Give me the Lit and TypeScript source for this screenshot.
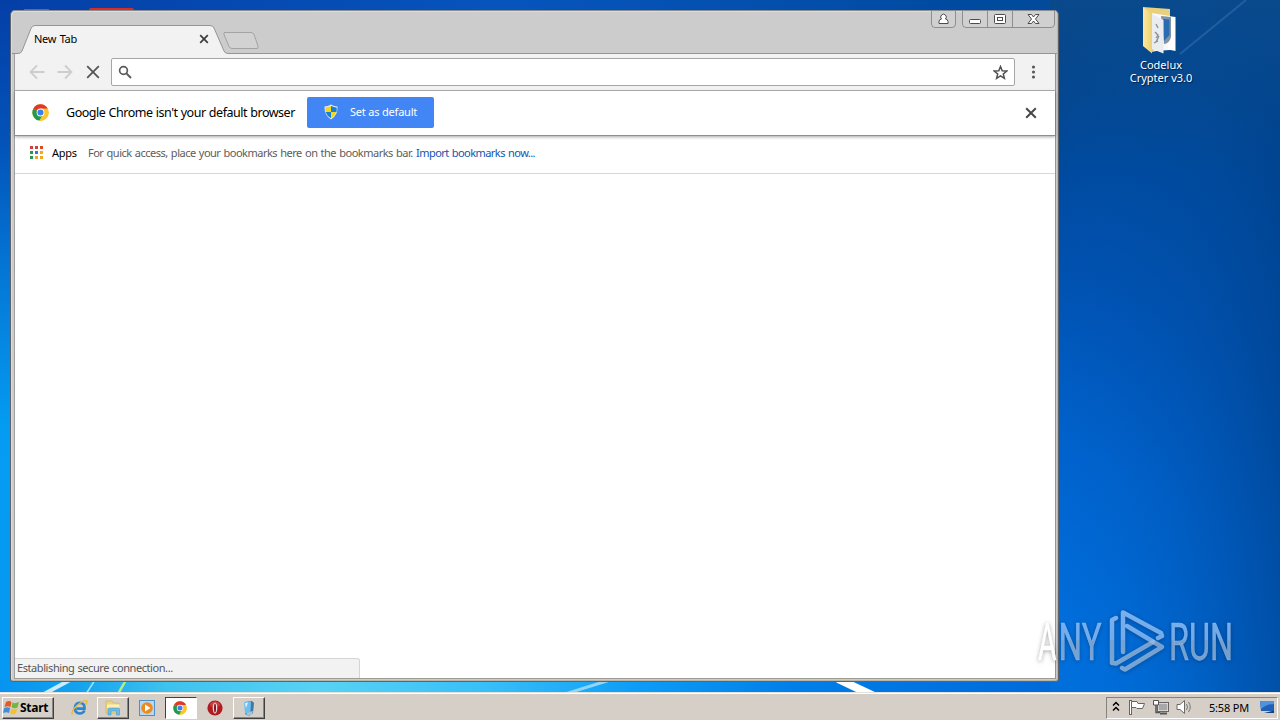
import { LitElement, html, svg, css } from "lit";
import { customElement } from "lit/decorators.js";

const chromeLogo = (size: number) => html`<svg class="ico" width=${size} height=${size} viewBox="0 0 48 48">
  <circle cx="24" cy="24" r="23" fill="#fbc116" />
  <path d="M24 24 L4 12.5 A23 23 0 0 0 21 46.8 L32 29z" fill="#229a52" />
  <path d="M24 24 L4 12.5 A23 23 0 0 1 44.4 13.5 H24z" fill="#dc3a2c" />
  <path d="M24 13.5 H44.4 A23 23 0 0 1 21 46.8 L33.4 29z" fill="#fdc52c" />
  <circle cx="24" cy="24" r="11" fill="#fff" />
  <circle cx="24" cy="24" r="8.6" fill="#3f7fe8" />
</svg>`;

const APP_DOTS = ["#c8443c", "#c8443c", "#dc4c1c", "#2a9450", "#2f78e0", "#f0a81c", "#2a9450", "#f0a81c", "#f0a81c"];

@customElement("desk-wallpaper")
class DeskWallpaper extends LitElement {
  static styles = css`
    :host { display: block; width: 1280px; height: 692px; overflow: hidden; }
    svg { display: block; }
  `;
  render() {
    return html`<svg width="1280" height="692">
      <defs>
        <linearGradient id="l" x1="0" y1="0" x2="0" y2="1">
          <stop offset="0" stop-color="#043fa6" /><stop offset=".2" stop-color="#0352b8" />
          <stop offset=".4" stop-color="#0478d6" /><stop offset=".62" stop-color="#049cf2" />
          <stop offset="1" stop-color="#0698f2" />
        </linearGradient>
        <linearGradient id="t" x1="0" x2="1">
          <stop offset="0" stop-color="#043fa6" /><stop offset=".4" stop-color="#0655bd" />
          <stop offset=".75" stop-color="#004ba0" /><stop offset="1" stop-color="#0a4a8c" />
        </linearGradient>
        <linearGradient id="r" gradientUnits="userSpaceOnUse" x1="1040" y1="620" x2="1300" y2="130">
          <stop offset="0" stop-color="#006fdc" /><stop offset=".3" stop-color="#0062cc" />
          <stop offset=".6" stop-color="#004fac" /><stop offset="1" stop-color="#003f84" />
        </linearGradient>
        <linearGradient id="rd" x1="0" x2="1">
          <stop offset="0" stop-color="#0068d8" stop-opacity="0" /><stop offset=".4" stop-color="#0058b8" stop-opacity=".25" />
          <stop offset="1" stop-color="#004594" stop-opacity=".7" />
        </linearGradient>
        <linearGradient id="rt" x1="0" y1="0" x2="0" y2="1">
          <stop offset="0" stop-color="#0a4a8c" stop-opacity=".9" /><stop offset="1" stop-color="#0a4a8c" stop-opacity="0" />
        </linearGradient>
        <linearGradient id="b" x1="0" x2="1">
          <stop offset="0" stop-color="#0694f0" /><stop offset=".06" stop-color="#14a2ee" />
          <stop offset=".13" stop-color="#3ec2ee" /><stop offset=".25" stop-color="#58d2f4" />
          <stop offset=".38" stop-color="#38bff8" /><stop offset=".5" stop-color="#0c9cf6" />
          <stop offset=".62" stop-color="#007fe8" /><stop offset=".8" stop-color="#006cdc" />
          <stop offset="1" stop-color="#004fa8" />
        </linearGradient>
      </defs>
      <rect width="1280" height="20" fill="url(#t)" />
      <rect y="0" width="20" height="692" fill="url(#l)" />
      <rect y="680" width="1280" height="14" fill="url(#b)" />
      <rect x="1050" width="230" height="692" fill="url(#r)" />
      <rect x="1050" width="230" height="692" fill="url(#rd)" />
      <rect x="1050" width="230" height="170" fill="url(#rt)" />
      <path d="M1180 54 L1246 0" stroke="#6f9fd0" stroke-opacity=".25" stroke-width="2" />
      <g fill="none">
        <path d="M44 694 L70 680" stroke="#c9edff" stroke-width="4" />
        <path d="M86 694 L95 680" stroke="#a6e3fb" stroke-width="1.5" />
        <path d="M118 694 L126 680" stroke="#b6ec86" stroke-width="2.5" />
        <path d="M565 694 L610 680" stroke="#8fd6fa" stroke-width="3" />
        <path d="M838 679 L874 696" stroke="#fff" stroke-width="8" />
      </g>
      <rect x="24" y="9" width="25" height="3" fill="#3f70b8" />
      <rect x="89" y="8" width="45" height="5" rx="2" fill="#d82c24" />
    </svg>`;
  }
}

@customElement("browser-window")
class BrowserWindow extends LitElement {
  static styles = css`
    * { box-sizing: border-box; }
    :host {
      display: flex; flex-direction: column; position: relative;
      width: 1049px; height: 672px; background: #ccc;
      border: 1px solid #606468; border-top-color: #8a8e94; border-radius: 5px 5px 3px 3px;
      padding: 1px 2px 2px 3px; box-sizing: border-box;
      box-shadow: inset 1px 1px 0 #dcdcdc, inset -1px -1px 0 #b9b4aa;
      font: 11px "Noto Sans", sans-serif; color: #000; white-space: nowrap;
    }
    svg { display: block; flex: none; }
    .strip { height: 41px; flex: none; position: relative; z-index: 1; display: flex; margin: 0 -1px; }
    .tabshape { position: absolute; left: -1px; top: 0; }
    .tab { position: relative; display: flex; align-items: center; justify-content: space-between;
      width: 175px; height: 27px; margin: 13px 0 0 21px; }
    .tabname { letter-spacing: -.3px; word-spacing: 1px; }
    .controls { position: absolute; right: 1px; top: -1px; }
    .client { flex: 1; display: flex; flex-direction: column; background: #fff; min-height: 0;
      border-left: 1px solid #a0a0a0; border-right: 1px solid #98948c; border-bottom: 1px solid #a09c94; }
    .toolbar { height: 38px; flex: none; background: #f2f2f2; border-bottom: 1px solid #b4b4b4;
      display: flex; align-items: center; padding: 1px 14px 0 14px; gap: 12px; position: relative; }
    .omni { flex: 1; height: 28px; border: 1px solid #a6a6a6; border-radius: 2px; background: #fff;
      display: flex; align-items: center; justify-content: space-between; padding: 0 6px; margin: 0 0 0 -2px; }
    .info { height: 45px; flex: none; display: flex; align-items: center; padding: 0 17px 1px 17px;
      border-bottom: 1px solid #8f8f8f; box-shadow: 0 1px 3px rgba(0,0,0,.35); position: relative; }
    .msg { font-size: 12.5px; margin-left: 17px; width: 241px; letter-spacing: -.47px; word-spacing: .4px; }
    .default { width: 127px; height: 31px; background: #4285f4; border-radius: 2px; color: #fff;
      display: flex; align-items: center; padding: 0 0 1px 17px; gap: 12px; }
    .default span { letter-spacing: -.2px; margin-top: -1px; }
    .spring { flex: 1; }
    .marks { height: 38px; flex: none; display: flex; align-items: center; border-bottom: 1px solid #d8d8d8; padding: 0 0 4px 14px; }
    .apps { margin-left: 9px; width: 36px; letter-spacing: -.3px; }
    .hint { color: #5c5c5c; width: 328px; letter-spacing: -.5px; word-spacing: .8px; }
    .link { color: #1155b0; letter-spacing: -.55px; word-spacing: .8px; }
    .page { flex: 1; display: flex; align-items: flex-end; }
    .status { width: 345px; height: 20px; background: #f2f2f2; border: 1px solid #d4d4d4; border-left: 0; border-bottom: 0;
      border-radius: 0 3px 0 0; color: #555; padding: 1px 0 0 2px; line-height: 15px; letter-spacing: -.42px; word-spacing: .6px; }
  `;
  render() {
    return html`
      <div class="strip">
        <svg class="tabshape" width="1045" height="42">
          <path d="M0 41.5 H6 Q9 41.5 10 39 L19 16.5 Q20 13.5 23 13.5 H198 Q201 13.5 202 16 L212 39 Q213 41.5 216 41.5 H1045 V44 H0z" fill="#f2f2f2" stroke="#959595" />
          <path d="M212.500 20.500 H239 Q241 20.500 242 22.500 L246 34 Q246.500 36.500 245 36.500 H220 Q218 36.500 217 34.500 L212 22.500 Q211.500 20.500 213 20.500z" fill="#d2d2d2" stroke="#a3a3a3" />
        </svg>
        <div class="tab">
          <span class="tabname">New Tab</span>
          <svg width="10" height="10"><path d="M1.200 1.200 L8.800 8.800 M8.800 1.200 L1.200 8.800" stroke="#3c3c3c" stroke-width="1.700" /></svg>
        </div>
        <svg class="controls" width="126" height="18">
          <g fill="none" stroke="#8e8e8e">
            <path d="M1.500 0 V13 Q1.500 16.500 5 16.500 H22 Q25.500 16.500 25.500 13 V0" fill="#d0d0d0" />
            <path d="M32.500 0 V13 Q32.500 16.500 36 16.500 H121 Q124.500 16.500 124.500 13 V0" fill="#d0d0d0" />
            <path d="M57.500 0 V16 M82.500 0 V16" />
          </g>
          <g fill="#fff" stroke="#4c4c4c">
            <path d="M9 12.500 V10.500 Q9 8.500 11.500 8 A2.800 2.800 0 1 1 15.500 8 Q18 8.500 18 10.500 V12.500z" />
            <rect x="39.500" y="8.500" width="11" height="4" rx="1" />
            <rect x="64.500" y="3.500" width="11" height="9" rx="1" /><rect x="67.500" y="6.500" width="5" height="3" />
            <path d="M98 3.500 H101.500 L103.500 6 L105.500 3.500 H109 L105.500 8 L109 12.500 H105.500 L103.500 10 L101.500 12.500 H98 L101.500 8z" />
          </g>
        </svg>
      </div>
      <div class="client">
        <div class="toolbar">
          <svg width="16" height="16"><path d="M15.500 8 H1.500 M8 1.500 L1.500 8 L8 14.500" fill="none" stroke="#cdcdcd" stroke-width="1.800" /></svg>
          <svg width="16" height="16"><path d="M.5 8 H14.500 M8 1.500 L14.500 8 L8 14.500" fill="none" stroke="#cdcdcd" stroke-width="1.800" /></svg>
          <svg width="16" height="16"><path d="M2.200 2.200 L13.800 13.800 M13.800 2.200 L2.200 13.800" stroke="#555" stroke-width="1.800" /></svg>
          <div class="omni">
            <svg width="14" height="14"><circle cx="5.500" cy="5.500" r="3.900" fill="none" stroke="#5a5a5a" stroke-width="1.700" /><path d="M8.400 8.400 L13 13" stroke="#5a5a5a" stroke-width="2" /></svg>
            <svg width="15" height="15" viewBox="0 0 15 15"><path d="M7.500 1.500 L9.200 5.700 L13.700 6 L10.300 8.900 L11.400 13.300 L7.500 10.900 L3.600 13.300 L4.700 8.900 L1.300 6 L5.800 5.700z" fill="none" stroke="#505050" stroke-width="1.500" /></svg>
          </div>
          <svg width="14" height="14"><g fill="#5a5a5a"><circle cx="6.500" cy="2" r="1.600" /><circle cx="6.500" cy="7" r="1.600" /><circle cx="6.500" cy="12" r="1.600" /></g></svg>
        </div>
        <div class="info">
          ${chromeLogo(17)}
          <span class="msg">Google Chrome isn't your default browser</span>
          <div class="default">
            <svg width="14" height="16" viewBox="0 0 14 16">
              <path d="M7 .5 Q10 2.500 13.500 2.500 Q14 11 7 15.500 Q0 11 .5 2.500 Q4 2.500 7 .5z" fill="#e8eef4" />
              <path d="M7 1.800 V8 H12.500 Q13 6 12.600 3.500 Q9.500 3.200 7 1.800z M7 8 H1.500 Q3 12 7 14.300z" fill="#1d7fd0" />
              <path d="M7 1.800 V8 H1.500 Q1 6 1.400 3.500 Q4.500 3.200 7 1.800z M7 8 H12.500 Q11 12 7 14.300z" fill="#f7d51d" />
            </svg>
            <span>Set as default</span>
          </div>
          <div class="spring"></div>
          <svg width="14" height="14"><path d="M2.200 2.200 L11.800 11.800 M11.800 2.200 L2.200 11.800" stroke="#484848" stroke-width="2" /></svg>
        </div>
        <div class="marks">
          <svg width="14" height="14">${APP_DOTS.map((c, i) => svg`<rect x=${(i % 3) * 5 + 1} y=${Math.floor(i / 3) * 5} width="3" height="3" fill=${c} />`)}</svg>
          <span class="apps">Apps</span>
          <span class="hint">For quick access, place your bookmarks here on the bookmarks bar.</span>
          <span class="link">Import bookmarks now...</span>
        </div>
        <div class="page"><div class="status">Establishing secure connection...</div></div>
      </div>`;
  }
}

@customElement("task-bar")
class TaskBar extends LitElement {
  static styles = css`
    * { box-sizing: border-box; }
    :host { display: flex; align-items: center; height: 28px; background: #d5cfc8; border-top: 1px solid #e4e0da;
      box-sizing: border-box; box-shadow: inset 0 1px 0 #fff; padding: 2px 2px 0 2px; font: 11px "Noto Sans", sans-serif; }
    svg { display: block; flex: none; }
    .raised { border: 1px solid; border-color: #fff #404040 #404040 #fff; box-shadow: inset -1px -1px 0 #8a8680; height: 22px;
      display: flex; align-items: center; justify-content: center; }
    .start { width: 52px; gap: 0; font: bold 12px "Noto Sans", sans-serif; letter-spacing: -.25px; margin-right: 17px;
      justify-content: flex-start; padding-bottom: 1px; }
    .btn { width: 32px; }
    .files { margin-left: 9px; }
    .slot { width: 36px; display: flex; justify-content: center; }
    .pressed { width: 32px; height: 22px; border: 1px solid; border-color: #404040 #fff #fff #404040; background: #fff;
      display: flex; align-items: center; justify-content: center; padding-right: 2px; }
    .spring { flex: 1; }
    .tray { width: 172px; height: 22px; border: 1px solid; border-color: #85817b #fff #fff #85817b;
      display: flex; align-items: center; padding: 0 0 1px 5px; }
    .flag { margin-left: 8px; }
    .net { margin-left: 6px; }
    .sound { margin-left: 7px; }
    .clock { width: 51px; margin-left: 16px; letter-spacing: -.2px; }
  `;
  render() {
    return html`
      <div class="raised start">
        <svg width="17" height="17" viewBox="0 0 17 17">
          <path d="M3 3 Q6 1 8.500 3 L7.500 8 Q5 6.500 1.500 8z" fill="#e25a24" /><path d="M9.500 3.500 Q12 5 16 3 L14.500 8.500 Q11.500 10 8.500 8.300z" fill="#6fb840" />
          <path d="M1.200 9 Q4.500 7.500 7.200 9 L6 14 Q3.500 12.500 0 14z" fill="#3f8edc" /><path d="M8.200 9.500 Q11 11 14.300 9.500 L13 14.500 Q10 16 7 14.500z" fill="#f6c22c" />
        </svg>
        <span>Start</span>
      </div>
      <svg width="17" height="17" viewBox="0 0 17 17">
        <path d="M13.500 11.500 Q12 14.500 8.800 14.500 Q3.800 14 3.800 9 Q4.200 4 9 3.800 Q13.800 4.200 13.500 9.600 H5.500" fill="none" stroke="#2b86d4" stroke-width="2.600" />
        <path d="M1.500 15.500 Q-.5 13 5.500 7 Q12 1 15.300 1.700 Q17 2.500 14.500 6" fill="none" stroke="#e8bc38" stroke-width="1.400" />
      </svg>
      <div class="raised btn files">
        <svg width="18" height="17" viewBox="0 0 18 17">
          <path d="M2 2 H8 L9 4 H15 V14 H2z" fill="#f0d577" stroke="#cfae50" stroke-width=".6" /><path d="M3 5.500 H15.500 V9 H3z" fill="#fbf0b8" />
          <path d="M4 16 V10.500 Q4 9 5.500 9 H14 Q15.500 9 15.500 10.500 V16 H12.500 V12 H7 V16z" fill="#6cbbe8" stroke="#4a9aca" stroke-width=".6" />
        </svg>
      </div>
      <div class="slot">
        <svg width="16" height="16"><rect x=".5" y=".5" width="15" height="15" fill="#b7d8f2" stroke="#4f8fca" /><circle cx="8" cy="8" r="5.800" fill="#ee8a1c" /><path d="M6 4.500 L11.500 8 L6 11.500z" fill="#fff" /></svg>
      </div>
      <div class="pressed">${chromeLogo(14)}</div>
      <div class="slot">
        <svg width="16" height="16"><circle cx="8" cy="8" r="7.600" fill="#b01a20" /><ellipse cx="8" cy="4.500" rx="5" ry="3" fill="#d8585a" fill-opacity=".6" /><ellipse cx="8" cy="8" rx="2.300" ry="5.600" fill="#ecdcdc" /><ellipse cx="8" cy="8" rx="1" ry="4.600" fill="#8c1016" /></svg>
      </div>
      <div class="raised btn">
        <svg width="16" height="18" viewBox="0 0 16 18">
          <path d="M4 3 L11 2 L13 4 L12 14 L8 17 L4 15z" fill="#3f78a4" /><path d="M3 3.500 L10 2.500 L9.500 13 L4 14.500z" fill="#6cc0f0" /><path d="M4 4 L7 3.500 L5 9z" fill="#e2f5ff" /><path d="M5 14 L12 12 L11 15 L7 17z" fill="#a9c4d4" />
        </svg>
      </div>
      <div class="spring"></div>
      <div class="tray">
        <svg width="8" height="12"><path d="M1 4.500 L4 1.500 L7 4.500 M1 9.500 L4 6.500 L7 9.500" fill="none" stroke="#000" stroke-width="1.500" /></svg>
        <svg class="flag" width="18" height="17"><path d="M2.500 1 V16" stroke="#666" stroke-width="3" /><path d="M2.500 2 V15" stroke="#fff" /><path d="M3.500 2.500 H9 L10 4.500 H16.500 L14.500 9.500 H9 L8 8.500 H3.500z" fill="#fff" stroke="#666" /></svg>
        <svg class="net" width="17" height="17">
          <rect x="6" y="4" width="10" height="8" fill="#a8a8a8" stroke="#fff" /><rect x="5.500" y="3.500" width="11" height="9" fill="none" stroke="#666" /><path d="M8 14.500 H15" stroke="#555" stroke-width="2" />
          <path d="M1.500 1.500 H6.500 V6 H1.500z" fill="#fff" stroke="#555" /><path d="M4 6 V13.500 H8" fill="none" stroke="#555" stroke-width="1.500" />
        </svg>
        <svg class="sound" width="17" height="16"><path d="M1 5.500 H4 L8.500 1.500 V14.500 L4 10.500 H1z" fill="#fff" stroke="#6a6a6a" /><path d="M10.500 5 Q12.500 8 10.500 11 M12.500 3 Q16 8 12.500 13" fill="none" stroke="#777" /></svg>
        <span class="clock">5:58 PM</span>
        <svg width="15" height="14"><path d="M0 1 H14 V11 H1z" fill="#2060b8" /><path d="M0 1 H14 V4 Q7 4 1 9z" fill="#4f92de" /><path d="M4 13 H14 V10.500z" fill="#174078" /></svg>
      </div>`;
  }
}

@customElement("app-root")
class AppRoot extends LitElement {
  static styles = css`
    * { box-sizing: border-box; }
    :host { display: block; position: relative; width: 1280px; height: 720px; overflow: hidden; }
    .screen { display: flex; flex-direction: column; height: 720px; }
    .desk { flex: 1; position: relative; overflow: hidden; }
    .wall { position: absolute; left: 0; top: 0; }
    .win { position: absolute; left: 10px; top: 10px; }
    .folder { position: absolute; left: 1121px; top: 4px; width: 80px; display: flex; flex-direction: column; align-items: center;
      font: 11px/13px "Noto Sans", sans-serif; color: #fff; text-align: center; text-shadow: 1px 1px 1px #00204a; }
    .name { margin-top: 2px; letter-spacing: 0; white-space: nowrap; }
    .mark { position: absolute; left: 1030px; top: 600px; font-family: Roboto, sans-serif; overflow: visible;
      filter: drop-shadow(0 1px 2px rgba(0,0,0,.35)); }
  `;
  render() {
    return html`<div class="screen">
      <div class="desk">
        <desk-wallpaper class="wall"></desk-wallpaper>
        <browser-window class="win"></browser-window>
        <div class="folder">
          <svg width="42" height="52" viewBox="0 0 42 52">
            <defs><linearGradient id="f" x1="0" x2="1"><stop offset="0" stop-color="#fbeaa0" /><stop offset="1" stop-color="#ecd070" /></linearGradient></defs>
            <path d="M3 3 L30 5 V44 L12 48z" fill="#ead07c" />
            <path d="M12 9 L30 12 V46 L14 47z" fill="#f6f8fa" />
            <path d="M35.500 13 L35.500 47 L28 45.500 V12z" fill="#fff" />
            <path d="M21 12 L31 13 V33 Q29 40 24 40z" fill="#8294a4" /><path d="M23 15 L29.500 15.500 V31 L24 37z" fill="#2a6cb4" />
            <path d="M12 10 L23.500 16 V49.500 L12 45z" fill="#e9edf0" />
            <path d="M16 20 L18 24 M15 28 L18 31 L16 34 M19 32 L16 38 M14 39 L18 37" fill="none" stroke="#868c92" stroke-width="1.300" />
            <path d="M3 3 L12 10 V49.500 L3 42z" fill="url(#f)" />
          </svg>
          <span class="name">Codelux<br />Crypter v3.0</span>
        </div>
      </div>
      <task-bar></task-bar>
    </div>
    <svg class="mark" width="230" height="90">
      <defs><linearGradient id="w" gradientUnits="userSpaceOnUse" x1="0" y1="10" x2="0" y2="72">
        <stop offset="0" stop-color="#8fc0fa" stop-opacity=".85" /><stop offset=".48" stop-color="#8fc0fa" stop-opacity=".8" />
        <stop offset=".5" stop-color="#a0bee0" stop-opacity=".72" /><stop offset="1" stop-color="#a0bee0" stop-opacity=".75" />
      </linearGradient></defs>
      <g font-size="51" font-weight="400" fill="url(#w)" stroke="url(#w)" stroke-width=".5">
        <text x="8" y="60" textLength="18.500" lengthAdjust="spacingAndGlyphs" fill="#fff" stroke="#fff">A</text>
        <text x="28.500" y="60" textLength="43" lengthAdjust="spacingAndGlyphs">NY</text>
        <text x="139" y="60" textLength="64" lengthAdjust="spacingAndGlyphs">RUN</text>
      </g>
      <g fill="none" stroke="url(#w)" stroke-width="4.500" stroke-linejoin="round" stroke-linecap="round">
        <path d="M86 18 L82 20 V63 L86 63.500 L123 42" />
        <path d="M128 38 L132 36 L131 33 L93 12.500 V52" />
        <path d="M92 68 L95 69.500 L132 47 L97 26" />
      </g>
    </svg>`;
  }
}
